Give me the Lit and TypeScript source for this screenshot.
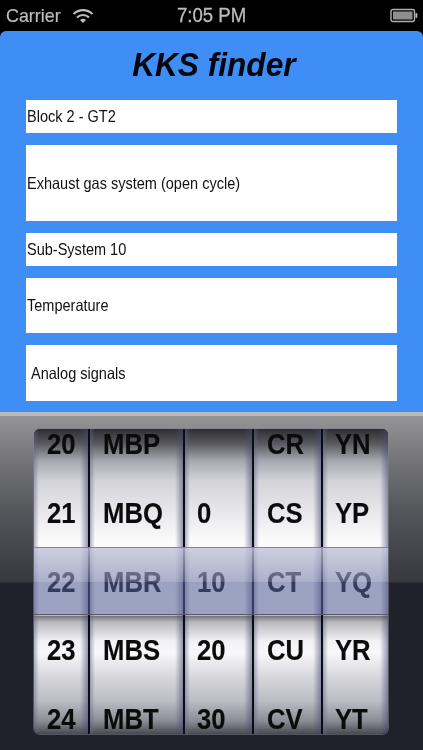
import { LitElement, html, css } from "lit";
import { customElement } from "lit/decorators.js";

const columns = [
  { cls: "c1", items: ["20", "21", "22", "23", "24"] },
  { cls: "c2", items: ["MBP", "MBQ", "MBR", "MBS", "MBT"] },
  { cls: "c3", items: ["", "0", "10", "20", "30"] },
  { cls: "c4", items: ["CR", "CS", "CT", "CU", "CV"] },
  { cls: "c5", items: ["YN", "YP", "YQ", "YR", "YT"] },
];

const fields = [
  { cls: "h33", text: "Block 2 - GT2" },
  { cls: "h76", text: "Exhaust gas system (open cycle)" },
  { cls: "h33", text: "Sub-System 10" },
  { cls: "h55", text: "Temperature" },
  { cls: "h56 inset", text: "Analog signals" },
];

@customElement("app-root")
export class AppRoot extends LitElement {
  static styles = css`
    :host {
      display: block;
      width: 423px;
      height: 750px;
      overflow: hidden;
      background: #000;
      font-family: "Liberation Sans", Arial, sans-serif;
    }
    .squeeze {
      display: inline-block;
      transform-origin: left center;
      white-space: nowrap;
    }
    .status {
      height: 31px;
      display: grid;
      grid-template-columns: 1fr 70px 1fr;
      align-items: center;
      padding: 0 5px 0 6px;
      color: #bdbdbd;
      filter: blur(0.4px);
    }
    .status-left {
      display: flex;
      align-items: center;
    }
    .carrier-box {
      width: 66px;
    }
    .carrier {
      font-size: 19px;
      transform: scaleX(0.94);
      -webkit-text-stroke: 0.2px #bdbdbd;
    }
    .time {
      font-size: 20px;
      -webkit-text-stroke: 0.3px #bdbdbd;
      transform: scaleX(0.93);
    }
    .status-right {
      display: flex;
      justify-content: flex-end;
    }
    .panel {
      height: 381px;
      box-sizing: border-box;
      background: #3f8ef5;
      border-radius: 6px 6px 0 0;
      padding: 0 26px;
      display: flex;
      flex-direction: column;
    }
    .title {
      height: 67px;
      margin: 0 0 2px;
      padding-left: 4px;
      display: flex;
      align-items: center;
      justify-content: center;
      font-size: 34px;
      font-weight: 700;
      font-style: italic;
      color: #03060c;
      filter: blur(0.4px);
    }
    .title span {
      display: inline-block;
      transform: scaleX(0.93);
    }
    .fields {
      display: flex;
      flex-direction: column;
      gap: 12px;
    }
    .field {
      background: #fff;
      display: flex;
      align-items: center;
      padding-left: 1px;
      font-size: 16.5px;
      color: #111;
      filter: blur(0.35px);
    }
    .field .squeeze {
      transform: scaleX(0.88);
    }
    .h33 { height: 33px; }
    .h76 { height: 76px; }
    .h55 { height: 55px; }
    .h56 { height: 56px; }
    .inset { padding-left: 5px; }
    .picker {
      position: relative;
      height: 338px;
      box-sizing: border-box;
      padding: 13px 35px 16px 34px;
      border-top: 4px solid #b9b9ba;
      background: linear-gradient(
        to bottom,
        #959597 0,
        #77777b 40px,
        #55565b 95px,
        #38393f 166px,
        #1f212b 167px,
        #1f212b 100%
      );
    }
    .wheels {
      height: 100%;
      display: flex;
      gap: 2px;
      border-radius: 6px;
      background: #0c0d12;
      box-sizing: border-box;
      box-shadow: 0 0 0 1px rgba(130, 130, 140, 0.55);
    }
    .wheel {
      height: 100%;
      display: flex;
      flex-direction: column;
      justify-content: center;
      gap: 42.7px;
      box-sizing: border-box;
      padding-left: 13px;
      background:
        linear-gradient(
          to right,
          rgba(100, 100, 140, 0.5) 0,
          rgba(100, 100, 140, 0) 5px,
          rgba(90, 90, 130, 0) calc(100% - 8px),
          rgba(70, 70, 115, 0.55) 100%
        ),
        linear-gradient(
          to bottom,
          #2e2e32 0,
          #56565c 14px,
          #a8a8b0 32px,
          #d2d2d8 52px,
          #e6e6ea 80px,
          #fbfbfc 112px,
          #ffffff 186px,
          #74747c 187px,
          #b8b8be 193px,
          #f2f2f5 212px,
          #f8f8fa 224px,
          #d4d4da 250px,
          #bcbcc4 272px,
          #8c8c96 292px,
          #44444c 306px
        );
    }
    .c1 { width: 54px; border-radius: 6px 0 0 6px; }
    .c2 { width: 93px; }
    .c3 { width: 67px; padding-left: 12px; }
    .c4 { width: 67px; }
    .c5 { flex: 1; padding-left: 12px; border-radius: 0 6px 6px 0; }
    .row {
      flex: none;
      height: 26px;
      display: flex;
      align-items: center;
      font-size: 29px;
      line-height: 26px;
      font-weight: 700;
      color: #0b0b0b;
      -webkit-text-stroke: 0.15px #0b0b0b;
      filter: blur(0.45px);
    }
    .row .squeeze {
      transform: scaleX(0.885);
    }
    .band {
      position: absolute;
      left: 34px;
      right: 35px;
      top: 132px;
      height: 66px;
      background: rgba(85, 95, 148, 0.58);
      box-shadow: 0 -1px 0 #84848c, 0 1px 0 #5a5a64;
    }
    .band-gloss {
      position: absolute;
      left: 0;
      right: 0;
      top: 0;
      height: 34px;
      background: linear-gradient(
        to bottom,
        rgba(255, 255, 255, 0.5),
        rgba(255, 255, 255, 0.16)
      );
    }
  `;

  render() {
    return html`
      <div class="status">
        <div class="status-left">
          <div class="carrier-box"><span class="squeeze carrier">Carrier</span></div>
          <svg width="22" height="16" viewBox="0 0 22 16" fill="none" stroke="#bdbdbd" stroke-width="2.2">
            <path d="M1.5 6a13.5 13.5 0 0 1 19 0" />
            <path d="M5 9.5a8.5 8.5 0 0 1 12 0" />
            <path d="M11 15l-3-3a4.2 4.2 0 0 1 6 0z" fill="#bdbdbd" stroke="none" />
          </svg>
        </div>
        <span class="squeeze time">7:05 PM</span>
        <div class="status-right">
          <svg width="28" height="15" viewBox="0 0 28 15">
            <rect x="1" y="1.5" width="23.5" height="12" rx="2" fill="none" stroke="#b0b0b0" stroke-width="1.4" />
            <rect x="3" y="3.5" width="19.5" height="8" fill="#8e8e8e" />
            <rect x="25.4" y="5" width="2" height="5" rx="1" fill="#b0b0b0" />
          </svg>
        </div>
      </div>
      <div class="panel">
        <h1 class="title"><span>KKS finder</span></h1>
        <div class="fields">
          ${fields.map(
            (f) => html`<div class="field ${f.cls}"><span class="squeeze">${f.text}</span></div>`
          )}
        </div>
      </div>
      <div class="picker">
        <div class="wheels">
          ${columns.map(
            (c) => html`<div class="wheel ${c.cls}">
              ${c.items.map((t) => html`<div class="row"><span class="squeeze">${t}</span></div>`)}
            </div>`
          )}
        </div>
        <div class="band"><div class="band-gloss"></div></div>
      </div>
    `;
  }
}
